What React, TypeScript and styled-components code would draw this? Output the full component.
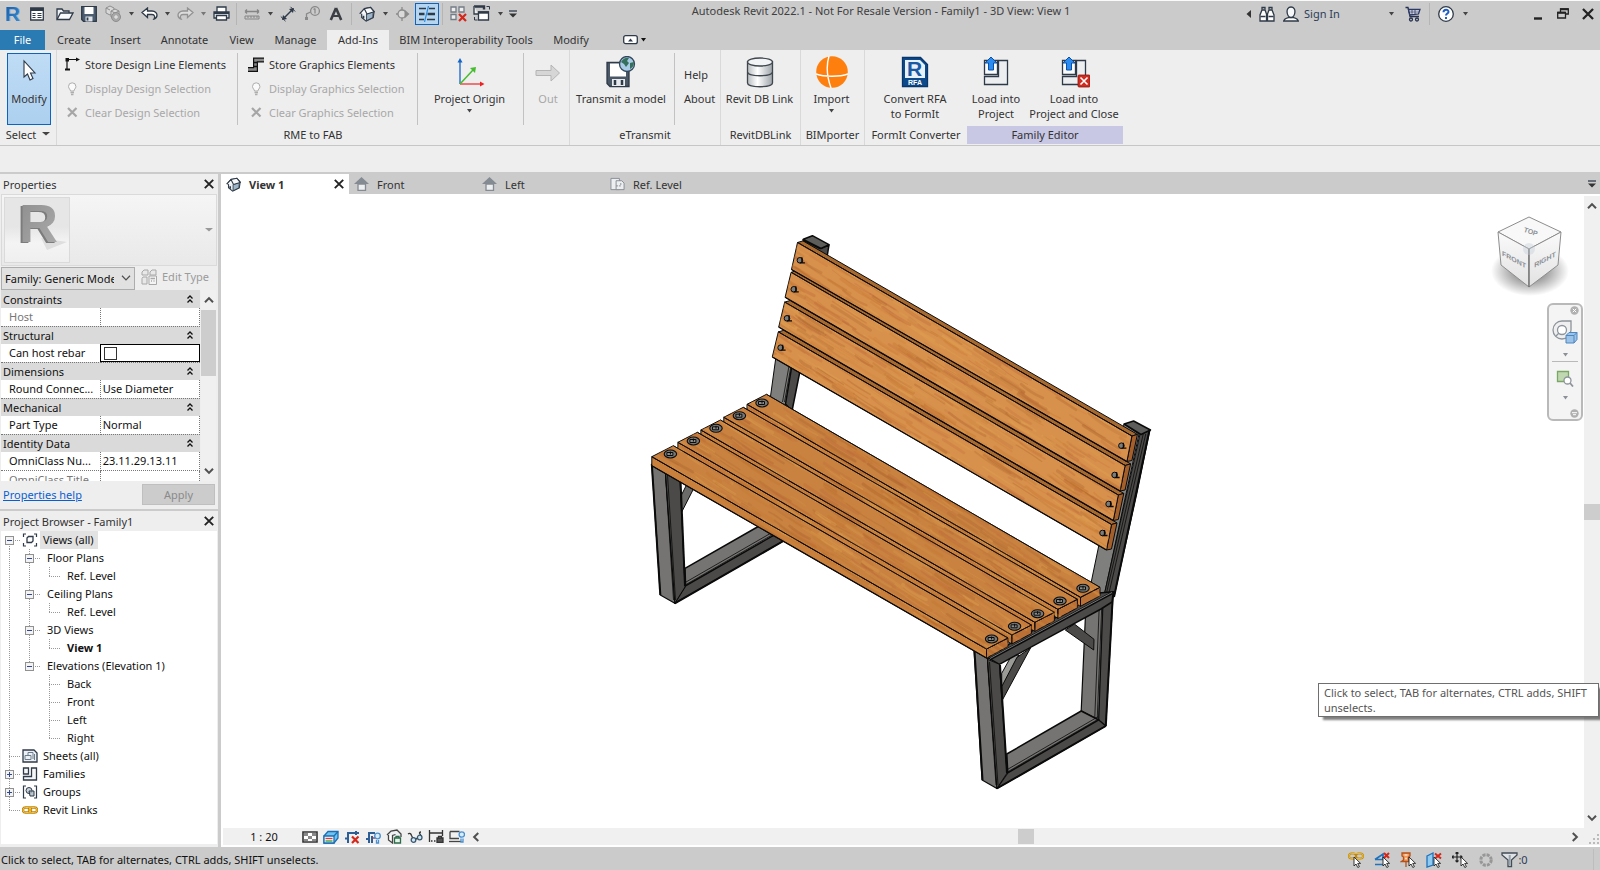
import React from 'react';
import styled, { createGlobalStyle, css } from 'styled-components';

const GlobalStyle = createGlobalStyle`
  * { box-sizing: border-box; }
  body { margin: 0; font-family: "Noto Sans", "Open Sans", sans-serif; font-size: 11px; line-height: 15px; color: #333; background: #eee; }
  button, select, input { font: inherit; color: inherit; }
  svg { display: block; flex: none; }
`;

/* ---------- shared pieces ---------- */

const bareButton = css`
  border: 0;
  padding: 0;
  margin: 0;
  background: none;
  display: flex;
  align-items: center;
  justify-content: center;
`;

const Window = styled.div`
  position: relative;
  display: flex;
  flex-direction: column;
  min-height: 100vh;
  background: #eee;
  overflow: hidden;
`;

const IconButton = styled.button<{ $w?: number }>`
  ${bareButton}
  flex: none;
  width: ${p => p.$w ?? 18}px;
  height: 20px;
`;

const Separator = styled.span`
  flex: none;
  width: 1px;
  height: 22px;
  background: #b5b5b5;
`;

const Caret = ({ color = '#444', w = 5 }: { color?: string; w?: number }) => (
  <svg width={w} height={4} viewBox="0 0 5 4" preserveAspectRatio="none"><path d="M0 0h5L2.5 3.5z" fill={color} /></svg>
);

const Icon = ({ w = 18, h, box, children }: { w?: number; h?: number; box?: string; children: React.ReactNode }) => (
  <svg width={w} height={h ?? w} viewBox={box ?? `0 0 ${w} ${h ?? w}`} fill="none" stroke="#2f3a48" strokeWidth={1.3}>{children}</svg>
);

const CloseMark = ({ s = 10, c = '#222' }: { s?: number; c?: string }) => (
  <svg width={s} height={s} viewBox="0 0 10 10"><path d="M.8.8l8.400 8.400M9.200.8L.8 9.200" stroke={c} strokeWidth="1.900" /></svg>
);

const Pointer = ({ x, y }: { x: number; y: number }) => (
  <path transform={`translate(${x} ${y})`} d="M0 0v9l2-2 1.800 3.500 1.600-.8L3.700 6.400h2.900z" fill="#fff" stroke="#222" strokeWidth=".9" />
);

/* ---------- title bar ---------- */

const TitleBar = styled.header`
  display: flex;
  align-items: center;
  height: 30px;
  padding-bottom: 4px;
  border-top: 1px solid #fafafa;
  background: #cbcbcb;
`;

const QuickAccess = styled.div`
  display: flex;
  align-items: center;
  gap: 6px;
  height: 24px;
  padding-left: 4px;
`;

const QuickGroup = styled(QuickAccess)``;

const ToggledButton = styled.button`
  ${bareButton}
  width: 24px;
  height: 22px;
  margin: 0 -3px;
  border: 1px solid #0a64c2;
  background: #b5d6f2;
`;

const Title = styled.h1`
  flex: 1;
  margin: 0 0 6px;
  font-size: 11px;
  font-weight: 400;
  text-align: center;
  white-space: nowrap;
  color: #404040;
`;

const AccountTools = styled.div`
  display: flex;
  align-items: center;
  gap: 8px;
  margin-right: 57px;
`;

const SignInButton = styled.button`
  ${bareButton}
  width: 114px;
  height: 20px;
  padding-right: 3px;
  gap: 5px;
  color: #2b3c57;
`;

const Grow = styled.span`
  flex: 1;
  text-align: left;
`;

const WindowControls = styled.div`
  display: flex;
`;

const RevitLogo = () => (
  <svg width="18" height="22" viewBox="0 0 18 22">
    <defs>
      <linearGradient id="logo" x1="0" x2="1" y2="1"><stop offset="0" stopColor="#1858a8" /><stop offset="1" stopColor="#3b8fd0" /></linearGradient>
      <filter id="logoDepth"><feDropShadow dx="1" dy="0" stdDeviation="0" floodColor="#7db5df" /></filter>
    </defs>
    <text x="1" y="18" fontFamily="Liberation Sans, sans-serif" fontWeight="700" fontSize="21" fill="url(#logo)" filter="url(#logoDepth)">R</text>
  </svg>
);

const BoxesIcon = () => (
  <Icon>
    <g stroke="#8d8d8d" fill="#d8d8d8" strokeWidth="1">
      <path d="M6 1l4 2v5L6 10 2 8V3z" /><path d="M11 4l4 2v6l-4 2-4-2V6z" /><path d="M7 6l4 2 4-2M11 8v6M2 3l4 2" fill="none" />
      <circle cx="12" cy="12" r="4.500" fill="#a8a8a8" /><path d="M10 12h4M12 10v4" stroke="#eee" />
    </g>
  </Icon>
);

const HouseIcon = ({ s = 18 }: { s?: number }) => (
  <Icon w={s} box="0 0 18 18">
    <path d="M1.500 8L6 3l7-1.500 4 4.500-1 7-8 4-5-4V8.500z" fill="#e9eef3" />
    <path d="M8.500 9L16 6.500 15.500 13 8.500 16.500z" fill="#9db4c8" strokeWidth="1" />
    <path d="M1 8.500L6 3l3 6M6 3l7-1.500 4 5-8 2.500" fill="#f7f9fb" /><path d="M5 11v3" strokeWidth="2" />
  </Icon>
);

const QuickAccessToolbar = () => (
  <QuickAccess>
    <IconButton aria-label="Revit"><RevitLogo /></IconButton>
    <IconButton aria-label="Home"><Icon w={14}><path d="M.7 1h12.600v12H.7z" fill="#fff" /><path d="M.7 2.500h12.600" strokeWidth="3" /><path d="M2.500 6.500h3M2.500 8.500h3M2.500 10.500h3M7.500 6.500h4M7.500 8.500h4M7.500 10.500h4" strokeWidth="1.200" /></Icon></IconButton>
    <QuickGroup>
      <IconButton aria-label="Open"><Icon w={18} h={14}><path d="M1 12V2h5l1.500 2H13v2" fill="#eef1f4" /><path d="M1 12.500L4.500 6H17l-3.500 6.500z" fill="#f8f9fa" /></Icon></IconButton>
      <IconButton aria-label="Save"><Icon w={16}><path d="M.7.7h14.600v14.600H2.500L.7 13.500z" fill="#4d5d70" /><path d="M3.500 1h9v7h-9z" fill="#fff" stroke="none" /><path d="M4.500 10.500h7v5h-7z" fill="#dfe4ea" stroke="none" /><path d="M6.500 11.500v3" strokeWidth="1.800" /></Icon></IconButton>
      <IconButton aria-label="Synchronize"><BoxesIcon /></IconButton>
      <IconButton $w={6} aria-label="Synchronize options"><Caret /></IconButton>
      <IconButton aria-label="Undo"><Icon w={17} h={13}><path d="M1 5.500L6.500 1v3H11c3.500 0 5 2.500 5 4s-1 3.500-3 4c1-1.500 1-4.500-2-4.500H6.500v3z" fill="#fff" /></Icon></IconButton>
      <IconButton $w={6} aria-label="Undo history"><Caret /></IconButton>
      <IconButton aria-label="Redo"><Icon w={17} h={13}><path d="M16 5.500L10.500 1v3H6C2.500 4 1 6.500 1 8s1 3.500 3 4C3 10.500 3 7.500 6 7.500h4.500v3z" fill="#dcdcdc" stroke="#929292" /></Icon></IconButton>
      <IconButton $w={6} aria-label="Redo history"><Caret color="#777" /></IconButton>
      <IconButton aria-label="Print"><Icon w={17} h={15}><path d="M4 6V1h9v5" fill="#fff" /><path d="M1 6h15v6H1z" fill="#e4e8ec" /><path d="M1 7h15" strokeWidth="2" /><path d="M3.500 9.500h10V14h-10z" fill="#fff" /></Icon></IconButton>
      <Separator />
      <IconButton aria-label="Measure"><Icon w={16} h={12}><path d="M1 3.500h14M1 3.500l2-2M1 3.500l2 2M15 3.500l-2-2M15 3.500l-2 2" stroke="#858585" /><path d="M1 8h14v3H1zM4 8v2M7 8v2M10 8v2M13 8v2" stroke="#858585" strokeWidth="1" /></Icon></IconButton>
      <IconButton $w={6} aria-label="Measure options"><Caret /></IconButton>
      <IconButton aria-label="Aligned dimension"><Icon w={16}><path d="M3 13L13 3" strokeWidth="1.400" /><path d="M2 14l1-5 4 4zM14 2l-1 5-4-4z" fill="#2f3a48" stroke="none" /><path d="M.8 10.500l4.700 4.700M10.500.8l4.700 4.700" strokeWidth="1" /></Icon></IconButton>
      <IconButton aria-label="Tag by category"><Icon w={17} h={15}><circle cx="11" cy="5" r="4.400" stroke="#8a8a8a" /><path d="M11 2.500v5M9.500 3.500l1.500-1M6.500 6L2.500 8v4" stroke="#8a8a8a" /><path d="M1 11h3v3H1z" fill="#8a8a8a" stroke="none" /></Icon></IconButton>
      <IconButton aria-label="Text"><Icon w={16}><path d="M8 2L2.800 14M8 2l5.200 12" strokeWidth="2.600" stroke="#3b3f45" /><path d="M4.500 10h7" strokeWidth="2" stroke="#3b3f45" /></Icon></IconButton>
      <Separator />
      <IconButton aria-label="Default 3D view"><HouseIcon s={16} /></IconButton>
      <IconButton $w={6} aria-label="3D view options"><Caret /></IconButton>
      <IconButton aria-label="Section"><Icon w={14}><circle cx="6" cy="7" r="4" stroke="#8a8a8a" fill="#dadada" /><path d="M0 7h2M6 0v3M6 11v3" stroke="#8a8a8a" /><path d="M8.500 2.500L13.500 7l-5 4.500z" fill="#8a8a8a" stroke="none" /></Icon></IconButton>
      <ToggledButton aria-label="Thin lines" aria-pressed="true"><Icon w={18} h={16}><path d="M1 2.500h7M11 2.500h6M1 13.500h5M9 13.500h8" strokeWidth="1.600" /><path d="M1 8h5.500M9.500 8H17" strokeWidth="2.600" /><path d="M10.500 0L6.500 16" stroke="#2f8be0" strokeWidth="1.200" /></Icon></ToggledButton>
      <Separator />
      <IconButton aria-label="Close inactive views"><Icon w={17}><path d="M1 2h5v5H1zM9 2h5v5H9zM1 9.500h5v5H1z" stroke="#737c86" fill="#eee" /><path d="M9 9l7 7M16 9l-7 7" stroke="#d3281c" strokeWidth="2.200" /></Icon></IconButton>
      <IconButton aria-label="Switch windows"><Icon w={18} h={17}><path d="M1 1.500h10v3" strokeWidth="2.400" /><path d="M1 1v8h4" fill="#eee" /><path d="M5.500 7h10v8h-10z" fill="#fff" /><path d="M5 7.500h11" strokeWidth="2.400" /><path d="M13.500 1.500h3v3M1.500 12v3h3" strokeWidth="1" /></Icon></IconButton>
      <IconButton $w={6} aria-label="Window list"><Caret /></IconButton>
      <IconButton $w={8} aria-label="Customize toolbar"><Icon w={8} h={8}><path d="M0 1h8" /><path d="M0 3.500h8L4 7.500z" fill="#333" stroke="none" /></Icon></IconButton>
    </QuickGroup>
  </QuickAccess>
);

const TopBar = () => (
  <TitleBar>
    <QuickAccessToolbar />
    <Title>Autodesk Revit 2022.1 - Not For Resale Version - Family1 - 3D View: View 1</Title>
    <AccountTools>
      <IconButton $w={6} aria-label="Collapse search"><Icon w={5} h={8}><path d="M5 0v8L.5 4z" fill="#333" stroke="none" /></Icon></IconButton>
      <IconButton $w={16} aria-label="Search"><Icon w={16}><path d="M1 15V9l2-5h3l1.500 4v7zM15 15V9l-2-5h-3L8.500 8v7z" fill="#fff" /><path d="M3 3.500V1.500h3v2M10 3.500V1.500h3v2M1.500 10.500h5M9.500 10.500h5" /></Icon></IconButton>
      <SignInButton>
        <Icon w={16}><path d="M.7 15c.5-2.500 3-3 5-3.500h4.600c2 .5 4.500 1 5 3.500z" fill="#fff" /><path d="M8 1c6 0 4.500 10 0 10.500C3.500 11 2 1 8 1z" fill="#f6f8fa" /></Icon>
        <Grow>Sign In</Grow>
        <Caret />
      </SignInButton>
      <IconButton $w={16} aria-label="App store"><Icon w={16}><path d="M.5 1.500H3L5 10.500h9" stroke="#27324f" /><path d="M3.500 3.500H15L13.500 8 5 9z" fill="#f2f4fb" stroke="#2c3a66" /><path d="M5 6h9M7 4v4.500M10 4v4" stroke="#2c3a66" strokeWidth=".8" /><circle cx="6" cy="13.500" r="1.500" stroke="#27324f" /><circle cx="12" cy="13.500" r="1.500" stroke="#27324f" /></Icon></IconButton>
      <Separator />
      <IconButton $w={16} aria-label="Help"><Icon w={16}><circle cx="8" cy="8" r="7.300" fill="#fff" /><path d="M5.500 6.200C5.500 2.800 10.700 3 10.500 6c-.1 1.500-2.500 1.700-2.500 3.500" stroke="#1f5fc4" strokeWidth="2" /><path d="M7 11h2v2H7z" fill="#1f5fc4" stroke="none" /></Icon></IconButton>
      <IconButton $w={6} aria-label="Help options"><Caret /></IconButton>
    </AccountTools>
    <WindowControls>
      <IconButton $w={25} aria-label="Minimize"><Icon w={8} h={12}><path d="M0 10.500h8" strokeWidth="2.400" stroke="#222" /></Icon></IconButton>
      <IconButton $w={25} aria-label="Restore"><Icon w={12} h={11}><path d="M3.500 4V1h7.800v5H8.500" stroke="#222" /><path d="M.7 4.500h7.800V10H.7z" stroke="#222" /><path d="M3 1.300h8.500M.5 4.800h8" stroke="#222" strokeWidth="2" /></Icon></IconButton>
      <IconButton $w={25} aria-label="Close"><CloseMark s={12} /></IconButton>
    </WindowControls>
  </TitleBar>
);

/* ---------- ribbon tabs ---------- */

const TabRow = styled.nav`
  display: flex;
  align-items: center;
  height: 20px;
  background: #cbcbcb;
`;

const RibbonTab = styled.button<{ $w: number; $kind?: 'file' | 'active' }>`
  ${bareButton}
  width: ${p => p.$w}px;
  height: 20px;
  padding-bottom: 2px;
  white-space: nowrap;
  color: ${p => (p.$kind === 'file' ? '#fff' : '#333')};
  background: ${p => (p.$kind === 'file' ? '#2a7ab3' : p.$kind === 'active' ? '#eee' : 'none')};
`;

const TabSpacer = styled.span<{ $w: number }>`
  width: ${p => p.$w}px;
`;

const tabs: [string, number][] = [
  ['Create', 54], ['Insert', 49], ['Annotate', 69], ['View', 45], ['Manage', 63],
  ['Add-Ins', 62], ['BIM Interoperability Tools', 154], ['Modify', 56],
];

const RibbonTabs = () => (
  <TabRow>
    <RibbonTab $w={45} $kind="file">File</RibbonTab>
    <TabSpacer $w={2} />
    {tabs.map(([name, w]) => <RibbonTab key={name} $w={w} $kind={name === 'Add-Ins' ? 'active' : undefined}>{name}</RibbonTab>)}
    <TabSpacer $w={22} />
    <IconButton aria-label="Minimize ribbon"><Icon w={15} h={10}><rect x=".7" y=".7" width="13.600" height="8" rx="2" fill="#fff" /><path d="M5 6.500h5L7.500 3.500z" fill="#2f3a48" stroke="none" /></Icon></IconButton>
    <IconButton $w={8} aria-label="Ribbon display options"><Caret color="#111" /></IconButton>
  </TabRow>
);

/* ---------- ribbon ---------- */

const Ribbon = styled.section`
  display: flex;
  height: 96px;
  background: #eee;
  border-bottom: 1px solid #c6c6c6;
`;

const Panel = styled.div<{ $w: number; $open?: boolean }>`
  display: flex;
  flex-direction: column;
  flex: none;
  width: ${p => p.$w}px;
  border-right: ${p => (p.$open ? 0 : 1)}px solid #d9d9d9;
`;

const PanelBody = styled.div`
  display: flex;
  height: 76px;
  padding: 3px 0 1px;
`;

const PanelTitle = styled.div<{ $accent?: boolean }>`
  display: flex;
  align-items: center;
  justify-content: center;
  gap: 6px;
  height: 18px;
  padding-bottom: 2px;
  white-space: nowrap;
  background: ${p => (p.$accent ? '#c8c7e4' : 'none')};
`;

const Column = styled.div<{ $w: number; $pad?: number; $last?: boolean }>`
  display: flex;
  flex-direction: column;
  flex: none;
  width: ${p => p.$w}px;
  padding-left: ${p => p.$pad ?? 0}px;
  border-right: ${p => (p.$last ? 0 : 1)}px solid #c2c2c2;
`;

const SmallButton = styled.button`
  ${bareButton}
  justify-content: flex-start;
  gap: 5px;
  height: 24px;
  padding-bottom: 2px;
  white-space: nowrap;
  &:disabled { color: #a8a8a8; }
`;

const LargeButton = styled.button<{ $w?: number }>`
  ${bareButton}
  flex: ${p => (p.$w ? 'none' : 1)};
  flex-direction: column;
  justify-content: flex-start;
  width: ${p => (p.$w ? `${p.$w}px` : 'auto')};
  padding: 3px 2px 0 0;
  gap: 3px;
  white-space: nowrap;
  &:disabled { color: #a8a8a8; }
`;

const ModifyButton = styled(LargeButton)`
  flex: none;
  width: 44px;
  height: 72px;
  margin-left: 7px;
  padding: 2px 0 0;
  border: 1px solid #0a64c2;
  background: linear-gradient(#c0dcf5, #acd0ef);
`;

const LargeIcon = ({ children }: { children?: React.ReactNode }) => <Icon w={32}>{children}</Icon>;

const BulbIcon = () => <Icon w={16}><path d="M6.500 11c0-1.500-2-2.500-2-4.500a3.700 3.700 0 017.400 0c0 2-2 3-2 4.500z" stroke="#adadad" fill="#fafafa" strokeWidth="1" /><path d="M6.500 12.500h3.500M7 14.500h2.500" stroke="#adadad" /></Icon>;
const ClearIcon = () => <Icon w={16}><path d="M4 4l8.500 8.500M12.500 4L4 12.500" stroke="#a6a6a6" strokeWidth="2.200" /></Icon>;

const LoadIcon = ({ close }: { close?: boolean }) => (
  <LargeIcon>
    <path d="M4.500 4.500h13v14h-13z" fill="#fafbfc" />
    <path d="M18.500 4.500h9V28.500h-23v-8h14z" fill="#eceef0" />
    <path d="M11 1l6 6h-3.500v7h-5V7H5z" fill="#2a8cf0" stroke="#0d4fa3" strokeWidth="1" />
    {close && <g><rect x="20" y="19" width="12" height="12" rx="1" fill="#d02c20" stroke="#8c1610" strokeWidth=".8" /><path d="M22.500 21.500l7 7M29.500 21.500l-7 7" stroke="#fff" strokeWidth="1.600" /></g>}
  </LargeIcon>
);

const AddInsRibbon = () => (
  <Ribbon>
    <Panel $w={57}>
      <PanelBody>
        <ModifyButton>
          <LargeIcon><path d="M11 5v16l3.500-3 2.500 6 3-1.500-2.500-5.500h4.500z" fill="#fff" strokeWidth="1.100" /></LargeIcon>
          Modify
        </ModifyButton>
      </PanelBody>
      <PanelTitle>Select <Caret w={8} /></PanelTitle>
    </Panel>
    <Panel $w={513}>
      <PanelBody>
        <Column $w={181} $pad={7}>
          <SmallButton><Icon w={16}><path d="M3 14V3.500h12" stroke="#111" strokeWidth="1.200" /><path d="M1.500 2h3.500v3.500H1.500zM1 12.500h5v2H1zM12 1.500l4 2-4 2z" fill="#111" stroke="none" /></Icon>Store Design Line Elements</SmallButton>
          <SmallButton disabled><BulbIcon />Display Design Selection</SmallButton>
          <SmallButton disabled><ClearIcon />Clear Design Selection</SmallButton>
        </Column>
        <Column $w={180} $pad={10}>
          <SmallButton><Icon w={16}><path d="M0 13.500h7.500V4H16" stroke="#111" strokeWidth="5" /><path d="M0 13.500h7.500V4H16" stroke="#8a8a8a" strokeWidth="2.600" /><path d="M5 10.500h5M5 6.500h5" stroke="#111" /></Icon>Store Graphics Elements</SmallButton>
          <SmallButton disabled><BulbIcon />Display Graphics Selection</SmallButton>
          <SmallButton disabled><ClearIcon />Clear Graphics Selection</SmallButton>
        </Column>
        <Column $w={106}>
          <LargeButton>
            <LargeIcon>
              <path d="M6 28V5" stroke="#1565c8" strokeWidth="1.300" /><path d="M3.500 6.500L6 2l2.500 4.500z" fill="#1565c8" stroke="none" />
              <path d="M6 28h20" stroke="#e33" strokeWidth="1.300" /><path d="M26 25.500l4.500 2.500-4.500 2.500z" fill="#e22" stroke="none" />
              <path d="M6 28L19 14" stroke="#45bd2c" strokeWidth="1.500" /><path d="M16 12l6-1-1 6z" fill="#45bd2c" stroke="none" />
            </LargeIcon>
            Project Origin
            <Caret />
          </LargeButton>
        </Column>
        <Column $w={50} $last>
          <LargeButton disabled>
            <LargeIcon><path d="M4 14.500h15V9l8.500 8-8.500 8v-5.500H4z" fill="#d6d6d6" stroke="#b4b4b4" strokeWidth="1" /></LargeIcon>
            Out
          </LargeButton>
        </Column>
      </PanelBody>
      <PanelTitle>RME to FAB</PanelTitle>
    </Panel>
    <Panel $w={151}>
      <PanelBody>
        <Column $w={105}>
          <LargeButton>
            <LargeIcon>
              <path d="M2 6.500h22v24H5l-3-3z" fill="#4a5766" /><path d="M5 7.500h16v13H5z" fill="#fff" stroke="none" /><path d="M7 23h13v7H7z" fill="#e6eaee" stroke="none" /><path d="M10 24v5M17 24v5" strokeWidth="2.500" />
              <circle cx="22" cy="8" r="7.500" fill="#a9cbe6" stroke="#33475c" /><path d="M16 6c2-4 6-5 8-4l-2 3 2 2-3 4-2-3zM25 7l4-1c0 4-2 6-4 7z" fill="#35705c" stroke="none" />
            </LargeIcon>
            Transmit a model
          </LargeButton>
        </Column>
        <Column $w={45} $pad={9} $last>
          <HelpLead />
          <SmallButton>Help</SmallButton>
          <SmallButton>About</SmallButton>
        </Column>
      </PanelBody>
      <PanelTitle>eTransmit</PanelTitle>
    </Panel>
    <Panel $w={80}>
      <PanelBody>
        <LargeButton>
          <LargeIcon>
            <defs><linearGradient id="steel"><stop offset="0" stopColor="#b8bcc0" /><stop offset=".4" stopColor="#fff" /><stop offset="1" stopColor="#9ea4aa" /></linearGradient></defs>
            <path d="M3.500 6v21c0 5 25 5 25 0V6z" fill="url(#steel)" stroke="#3f464d" /><ellipse cx="16" cy="6" rx="12.500" ry="4" fill="#f2f3f4" stroke="#3f464d" /><path d="M3.500 16c0 5 25 5 25 0" stroke="#3f464d" />
          </LargeIcon>
          Revit DB Link
        </LargeButton>
      </PanelBody>
      <PanelTitle>RevitDBLink</PanelTitle>
    </Panel>
    <Panel $w={64}>
      <PanelBody>
        <LargeButton>
          <LargeIcon><circle cx="16" cy="16" r="15.800" fill="#ff7f0e" stroke="none" /><path d="M13 0c-3 10-2 21 2 32M0 18c8 3 24 3 32 0" stroke="#fff" strokeWidth="1.400" /></LargeIcon>
          Import
          <Caret />
        </LargeButton>
      </PanelBody>
      <PanelTitle>BIMporter</PanelTitle>
    </Panel>
    <Panel $w={102} $open>
      <PanelBody>
        <LargeButton>
          <LargeIcon>
            <path d="M3.500 1.500h18l7 7v22h-25z" fill="#0d4a8c" stroke="#08366b" /><path d="M6 4h15l5 5v13H6z" fill="#e8f0f8" stroke="none" />
            <text x="8" y="20" fontFamily="Liberation Sans, sans-serif" fontWeight="700" fontSize="21" fill="#1a5aa5" stroke="none">R</text>
            <text x="16" y="29" textAnchor="middle" fontFamily="Liberation Sans, sans-serif" fontWeight="700" fontSize="7" fill="#fff" stroke="none">RFA</text>
          </LargeIcon>
          <span>Convert RFA<br />to FormIt</span>
        </LargeButton>
      </PanelBody>
      <PanelTitle>FormIt Converter</PanelTitle>
    </Panel>
    <Panel $w={156} $open>
      <PanelBody>
        <LargeButton $w={60}><LoadIcon /><span>Load into<br />Project</span></LargeButton>
        <LargeButton><LoadIcon close /><span>Load into<br />Project and Close</span></LargeButton>
      </PanelBody>
      <PanelTitle $accent>Family Editor</PanelTitle>
    </Panel>
  </Ribbon>
);

const HelpLead = styled.span`
  height: 10px;
`;

const OptionsBar = styled.div`
  height: 26px;
  background: #eee;
`;

/* ---------- left palettes ---------- */

const Workspace = styled.main`
  display: flex;
  flex: 1;
  min-height: 0;
`;

const Palettes = styled.aside`
  display: flex;
  flex-direction: column;
  flex: none;
  width: 221px;
  border-right: 3px solid #cbcbcb;
  border-top: 2px solid #cbcbcb;
`;

const PaletteHeader = styled.div`
  display: flex;
  align-items: center;
  justify-content: space-between;
  height: 20px;
  padding: 0 4px 0 3px;
`;

const TypeSelector = styled.div`
  display: flex;
  align-items: center;
  justify-content: space-between;
  height: 72px;
  margin: 0 1px;
  padding: 0 3px 0 2px;
  border: 1px solid #dadada;
  background: linear-gradient(#f5f5f5, #e9e9e9);
`;

const Thumbnail = styled.div`
  width: 66px;
  height: 66px;
  border: 1px solid #dadada;
  background: linear-gradient(#e6e6e6 45%, #f4f4f4 70%, #efefef);
`;

const TypeRow = styled.div`
  display: flex;
  align-items: center;
  gap: 6px;
  height: 24px;
  padding-left: 1px;
`;

const SelectWrap = styled.label`
  position: relative;
  display: flex;
  align-items: center;
`;

const SelectChevron = styled.span`
  position: absolute;
  right: 4px;
  pointer-events: none;
`;

const FamilySelect = styled.select`
  appearance: none;
  width: 134px;
  height: 23px;
  padding: 0 20px 0 3px;
  border: 1px solid #adadad;
  border-radius: 0;
  background: #e1e1e1;
  color: #111;
  overflow: hidden;
`;

const EditType = styled.button`
  ${bareButton}
  gap: 5px;
  padding-bottom: 3px;
  &:disabled { color: #9b9b9b; }
`;

const GridArea = styled.div`
  display: flex;
  height: 191px;
  overflow: hidden;
  padding-left: 1px;
`;

const PropertyTable = styled.table`
  width: 199px;
  height: 198px;
  table-layout: fixed;
  border-collapse: collapse;
  background: #fff;
  color: #111;
`;

const GroupCell = styled.th`
  height: 18px;
  padding: 0 7px 0 2px;
  text-align: left;
  font-weight: 400;
  background: #dadada;
`;

const GroupLine = styled.div`
  display: flex;
  align-items: center;
  justify-content: space-between;
  height: 17px;
`;

const Cell = styled.td<{ $dim?: boolean; $boxed?: boolean }>`
  height: 18px;
  line-height: 17px;
  padding: 0 0 0 8px;
  white-space: nowrap;
  overflow: hidden;
  text-overflow: ellipsis;
  color: ${p => (p.$dim ? '#777' : '#111')};
  border-right: 1px dotted #777;
  border-bottom: 1px dotted #777;
  & + & { padding-left: 2px; }
  ${p => p.$boxed && css`outline: 1px solid #000; outline-offset: -1px;`}
`;

const CheckBox = styled.input`
  appearance: none;
  display: block;
  width: 13px;
  height: 13px;
  margin: 1px 0 0 1px;
  border: 1px solid #333;
  background: #fff;
`;

const VScroll = styled.div<{ $w: number }>`
  display: flex;
  flex-direction: column;
  align-items: center;
  flex: none;
  width: ${p => p.$w}px;
  margin-left: 1px;
  background: #f0f0f0;
`;

const ScrollThumb = styled.div<{ $h: number; $w?: number }>`
  flex: none;
  width: ${p => (p.$w ? `${p.$w}px` : '100%')};
  height: ${p => p.$h}px;
  background: #cdcdcd;
`;

const PaletteFooter = styled.div`
  display: flex;
  align-items: center;
  justify-content: space-between;
  height: 28px;
  padding: 0 3px 2px;
`;

const HelpLink = styled.a`
  color: #0a5fd0;
  text-decoration: underline;
`;

const ApplyButton = styled.button`
  width: 73px;
  height: 21px;
  padding: 0;
  border: 1px solid #bfbfbf;
  background: #cccccc;
  &:disabled { color: #8a8a8a; }
`;

const Splitter = styled.div`
  height: 2px;
  background: #cbcbcb;
`;

const Arrow = ({ dir, s = 8, thin }: { dir: 'up' | 'down' | 'left' | 'right'; s?: number; thin?: boolean }) => {
  const turn = { up: 0, right: 90, down: 180, left: 270 }[dir];
  return <svg width={s} height={s} viewBox="0 0 8 8"><path transform={`rotate(${turn} 4 4)`} d="M.8 5.800L4 2.500l3.200 3.300" stroke="#505050" strokeWidth={thin ? 1 : 1.6} fill="none" /></svg>;
};

type PropRow = { group: string } | { name: string; value: React.ReactNode; dim?: boolean; boxed?: boolean };
const propertyRows: PropRow[] = [
  { group: 'Constraints' }, { name: 'Host', value: '', dim: true },
  { group: 'Structural' }, { name: 'Can host rebar', value: <CheckBox type="checkbox" aria-label="Can host rebar" />, boxed: true },
  { group: 'Dimensions' }, { name: 'Round Connec...', value: 'Use Diameter' },
  { group: 'Mechanical' }, { name: 'Part Type', value: 'Normal' },
  { group: 'Identity Data' }, { name: 'OmniClass Nu...', value: '23.11.29.13.11' },
  { name: 'OmniClass Title', value: '', dim: true },
];

const PropertiesPalette = () => (
  <>
    <PaletteHeader>Properties<IconButton $w={10} aria-label="Close properties"><CloseMark /></IconButton></PaletteHeader>
    <TypeSelector>
      <Thumbnail>
        <svg width="64" height="64" viewBox="0 0 64 64">
          <defs>
            <linearGradient id="grayR" x2="1" y2="1"><stop offset="0" stopColor="#8c8c8c" /><stop offset="1" stopColor="#adadad" /></linearGradient>
            <filter id="thumbDepth"><feDropShadow dx="-2" dy="1" stdDeviation="0" floodColor="#7c7c7c" /></filter>
          </defs>
          <path d="M36 40l26 4-20 8z" fill="#dedede" />
          <text x="14" y="44" fontFamily="Liberation Sans, sans-serif" fontWeight="700" fontSize="54" fill="url(#grayR)" filter="url(#thumbDepth)">R</text>
        </svg>
      </Thumbnail>
      <Caret w={8} color="#999" />
    </TypeSelector>
    <TypeRow>
      <SelectWrap>
        <FamilySelect aria-label="Family"><option>Family: Generic Models</option></FamilySelect>
        <SelectChevron><Arrow dir="down" s={10} thin /></SelectChevron>
      </SelectWrap>
      <EditType disabled>
        <Icon w={16}><path d="M1 3l2-2h4v5H1zM9 3l2-2h4v5H9zM1 9.500l1-1.500h4v7H1z" stroke="#a8a8a8" fill="#e8e8e8" strokeWidth="1" /><path d="M8 7h7.500v8.500H8z" stroke="#a8a8a8" fill="#f4f4f4" strokeWidth="1" /><path d="M9.500 9.500h4.500M10 12h1M12.500 12h1" stroke="#a8a8a8" /></Icon>
        Edit Type
      </EditType>
    </TypeRow>
    <GridArea>
      <PropertyTable>
        <tbody>
          {propertyRows.map(row => 'group' in row
            ? <tr key={row.group}><GroupCell colSpan={2}><GroupLine>{row.group}<Icon w={6} h={8}><path d="M.5 3.500L3 1l2.500 2.500M.5 7.500L3 5l2.500 2.500" stroke="#111" /></Icon></GroupLine></GroupCell></tr>
            : <tr key={row.name}><Cell $dim={row.dim}>{row.name}</Cell><Cell $boxed={row.boxed}>{row.value}</Cell></tr>)}
        </tbody>
      </PropertyTable>
      <VScroll $w={15}>
        <IconButton $w={15} aria-label="Scroll up"><Arrow dir="up" s={10} /></IconButton>
        <ScrollThumb $h={66} />
        <Grow />
        <IconButton $w={15} aria-label="Scroll down"><Arrow dir="down" s={10} /></IconButton>
      </VScroll>
    </GridArea>
    <PaletteFooter><HelpLink href="#help">Properties help</HelpLink><ApplyButton disabled>Apply</ApplyButton></PaletteFooter>
    <Splitter />
  </>
);

/* ---------- project browser ---------- */

const Tree = styled.ul`
  flex: 1;
  margin: 0 1px 3px;
  padding: 0;
  list-style: none;
  background: #fff;
  color: #111;
`;

const TreeRow = styled.li`
  display: flex;
  align-items: center;
  height: 18px;
  white-space: nowrap;
`;

type Guide = ' ' | 'v' | 't' | 'l' | 'b';

/* one 20px step of indentation: v passes through, t branches, l ends, b begins */
const GuideCell = styled.span<{ $kind: Guide }>`
  display: flex;
  align-items: center;
  flex: none;
  width: 20px;
  height: 18px;
  padding-left: 4px;
  background-repeat: no-repeat;
  background-image:
    repeating-linear-gradient(#999 0 1px, transparent 1px 2px),
    repeating-linear-gradient(90deg, #999 0 1px, transparent 1px 2px);
  background-position: 8px ${p => (p.$kind === 'b' ? 9 : 0)}px, 8px 9px;
  background-size:
    ${p => (p.$kind === ' ' ? 0 : 1)}px ${p => (p.$kind === 'l' || p.$kind === 'b' ? 9 : 18)}px,
    ${p => (p.$kind === ' ' || p.$kind === 'v' ? 0 : 12)}px 1px;
`;

const Expander = styled.button`
  ${bareButton}
  width: 9px;
  height: 9px;
  border: 1px solid #919191;
  background: #f3f3f3;
`;

const TreeIcon = styled.span`
  width: 18px;
  padding-left: 1px;
`;

const TreeLabel = styled.span<{ $icon?: boolean; $selected?: boolean; $bold?: boolean }>`
  padding: 0 4px 0 ${p => (p.$icon ? 3 : 6)}px;
  margin-left: ${p => (p.$icon ? 1 : 0)}px;
  height: 18px;
  line-height: 18px;
  background: ${p => (p.$selected ? '#e2e2e2' : 'none')};
  font-weight: ${p => (p.$bold ? 700 : 400)};
`;

const treeIcons: Record<string, React.ReactNode> = {
  views: <Icon w={16} h={14}><path d="M4 1H1.500v3M12 1h2.500v3M4 13H1.500v-3M12 13h2.500v-3" strokeWidth="1.200" /><path d="M5 5l1.500-1.500H11V8L9.500 9.500H5z" fill="#fff" /></Icon>,
  sheets: <Icon w={16} h={14}><path d="M1 1h11l3 3v9H1z" fill="#eef1f4" /><path d="M3 6.500h6v4H3zM6 6.500V3.500h5V10M12.500 5v6" strokeWidth="1" stroke="#6b7c8e" /></Icon>,
  families: <Icon w={16} h={14}><path d="M1.500 1h5v6h-5zM9.500 1h5v12h-13V9.500h8z" fill="#f4f6f8" /></Icon>,
  groups: <Icon w={16} h={14}><path d="M4 1H1.500v12H4M12 1h2.500v12H12" strokeWidth="1.200" /><circle cx="7" cy="5.500" r="3" fill="#c9d2db" strokeWidth="1" /><path d="M7 6h5v5H8z" fill="#aeb9c4" fillOpacity=".8" strokeWidth="1" /></Icon>,
  links: <Icon w={16} h={8}><rect x="1" y="1.500" width="8" height="5" rx="2.500" stroke="#b97f10" strokeWidth="2.400" /><rect x="7" y="1.500" width="8" height="5" rx="2.500" stroke="#b97f10" strokeWidth="2.400" /><rect x="1" y="1.500" width="8" height="5" rx="2.500" stroke="#f5c53a" strokeWidth="1" /><rect x="7" y="1.500" width="8" height="5" rx="2.500" stroke="#f5c53a" strokeWidth="1" /></Icon>,
};

const treeRows: { guides: Guide[]; label: string; exp?: '+' | '-'; icon?: string; selected?: boolean; bold?: boolean }[] = [
  { guides: ['b'], label: 'Views (all)', exp: '-', icon: 'views', selected: true },
  { guides: ['v', 't'], label: 'Floor Plans', exp: '-' },
  { guides: ['v', 'v', 'l'], label: 'Ref. Level' },
  { guides: ['v', 't'], label: 'Ceiling Plans', exp: '-' },
  { guides: ['v', 'v', 'l'], label: 'Ref. Level' },
  { guides: ['v', 't'], label: '3D Views', exp: '-' },
  { guides: ['v', 'v', 'l'], label: 'View 1', bold: true },
  { guides: ['v', 'l'], label: 'Elevations (Elevation 1)', exp: '-' },
  { guides: ['v', ' ', 't'], label: 'Back' },
  { guides: ['v', ' ', 't'], label: 'Front' },
  { guides: ['v', ' ', 't'], label: 'Left' },
  { guides: ['v', ' ', 'l'], label: 'Right' },
  { guides: ['t'], label: 'Sheets (all)', icon: 'sheets' },
  { guides: ['t'], label: 'Families', exp: '+', icon: 'families' },
  { guides: ['t'], label: 'Groups', exp: '+', icon: 'groups' },
  { guides: ['l'], label: 'Revit Links', icon: 'links' },
];

const ProjectBrowser = () => (
  <>
    <PaletteHeader>Project Browser - Family1<IconButton $w={10} aria-label="Close project browser"><CloseMark /></IconButton></PaletteHeader>
    <Tree>
      {treeRows.map((row, i) => (
        <TreeRow key={i}>
          {row.guides.map((g, j) => (
            <GuideCell key={j} $kind={g}>
              {row.exp && j === row.guides.length - 1 && (
                <Expander aria-label={`Toggle ${row.label}`}>
                  <svg width="7" height="7" viewBox="0 0 7 7"><path d={row.exp === '+' ? 'M1 3.500h5M3.500 1v5' : 'M1 3.500h5'} stroke="#33478f" /></svg>
                </Expander>
              )}
            </GuideCell>
          ))}
          {row.icon && <TreeIcon>{treeIcons[row.icon]}</TreeIcon>}
          <TreeLabel $icon={!!row.icon} $selected={row.selected} $bold={row.bold}>{row.label}</TreeLabel>
        </TreeRow>
      ))}
    </Tree>
  </>
);

/* ---------- drawing area ---------- */

const ViewArea = styled.section`
  display: flex;
  flex-direction: column;
  flex: 1;
  min-width: 0;
  background: #fff;
`;

const ViewTabs = styled.div`
  display: flex;
  align-items: flex-end;
  height: 22px;
  background: #cbcbcb;
`;

const ViewTab = styled.button<{ $active?: boolean }>`
  ${bareButton}
  width: 128px;
  height: 20px;
  padding: 0 5px;
  gap: 8px;
  font-weight: ${p => (p.$active ? 700 : 400)};
  background: ${p => (p.$active ? '#fff' : 'none')};
`;

const TabListButton = styled(IconButton)`
  margin-left: auto;
  margin-right: 4px;
`;

const CanvasRow = styled.div`
  display: flex;
  flex: 1;
`;

const Canvas = styled.div`
  position: relative;
  display: flex;
  align-items: center;
  justify-content: center;
  flex: 1;
  min-width: 0;
`;

const CanvasScroll = styled(VScroll)`
  justify-content: space-between;
  margin: 2px 0 0;
`;

const CubeHolder = styled.div`
  position: absolute;
  top: 15px;
  right: 10px;
`;

const NavBar = styled.div`
  position: absolute;
  top: 109px;
  right: 1px;
  display: flex;
  flex-direction: column;
  align-items: center;
  width: 36px;
  height: 118px;
  padding: 1px 2px;
  border: 2px solid #b9b9b9;
  border-radius: 6px;
  background: #f4f4f4;
`;

const NavEdge = styled.button`
  ${bareButton}
  align-self: flex-end;
  height: 10px;
`;

const NavTool = styled.button<{ $h: number }>`
  ${bareButton}
  flex-direction: column;
  width: 28px;
  height: ${p => p.$h}px;
  gap: 9px;
`;

const NavRule = styled.span`
  width: 26px;
  height: 1px;
  background: #b9b9b9;
`;

const ViewCube = () => (
  <svg width="84" height="96" viewBox="1490 209 84 96">
    <defs>
      <radialGradient id="cubeShadow"><stop offset=".3" stopColor="#000" stopOpacity=".45" /><stop offset="1" stopColor="#000" stopOpacity="0" /></radialGradient>
      <linearGradient id="cubeLeft" x2="0" y2="1"><stop offset="0" stopColor="#fafafa" /><stop offset="1" stopColor="#e2e2e2" /></linearGradient>
    </defs>
    <ellipse cx="1530" cy="271" rx="39" ry="25" fill="url(#cubeShadow)" />
    <g stroke="#8d8d8d" strokeWidth="1" strokeLinejoin="round">
      <path d="M1529 217l32 15-32 17-31-17z" fill="#f8f8f8" />
      <path d="M1498 232l31 17v38l-28-22z" fill="url(#cubeLeft)" />
      <path d="M1561 232l-32 17v38l29-22z" fill="url(#cubeLeft)" />
    </g>
    <path d="M1529 249v38" stroke="#666" />
    <circle cx="1529" cy="249" r="6" fill="#c4ccd8" fillOpacity=".4" />
    <g fontFamily="Liberation Sans, sans-serif" fontWeight="700" fontSize="7" fill="#8b9097" textAnchor="middle">
      <text transform="translate(1514 262) skewY(28)">FRONT</text>
      <text transform="translate(1545 262) skewY(-28)">RIGHT</text>
      <text transform="translate(1530 234) rotate(18)">TOP</text>
    </g>
  </svg>
);

/* ---------- bench model ---------- */

type Pt = [number, number];
const poly = (...pts: Pt[]) => pts.map(p => p.join(',')).join(' ');

const Face = ({ pts, fill, w = 1 }: { pts: Pt[]; fill: string; w?: number }) => (
  <polygon points={poly(...pts)} fill={fill} stroke="#0a0a0a" strokeWidth={w} strokeLinejoin="round" />
);

const Line = ({ a, b, w = 0.8 }: { a: Pt; b: Pt; w?: number }) => (
  <line x1={a[0]} y1={a[1]} x2={b[0]} y2={b[1]} stroke="#0a0a0a" strokeWidth={w} />
);

/* fine edge lines running next to the joint between two tube faces */
const Ribs = ({ a, b, d }: { a: Pt; b: Pt; d: Pt }) => (
  <>{[-1.5, -0.5].map(k => <Line key={k} a={[a[0] + d[0] * k, a[1] + d[1] * k]} b={[b[0] + d[0] * k, b[1] + d[1] * k]} />)}</>
);

const add = (p: Pt, x: number, y: number): Pt => [p[0] + x, p[1] + y];

const slats = [0, 1, 2, 3].map(i => {
  const tl: Pt = [797.5 - i * 6.4, 242.5 + i * 29.8];
  const tr: Pt = [1131.9 - i * 6.8, 436 + i * 29.5];
  const drop = i === 0 ? 27 : 25;
  return { tl, tr, bl: add(tl, -6, drop), br: add(tr, -5, 25.5) };
});

const boards = ([
  [[747, 404.3], [1080.5, 597.3]], [[723.8, 417.3], [1057.9, 609.3]], [[700.9, 430], [1034.9, 622.3]],
  [[677.9, 442.3], [1011.9, 635]], [[651.8, 456.7], [986.5, 649]],
] as [Pt, Pt][]).map(([l, r], i) => ({ l, r, back: (i === 4 ? [21.5, -11] : [19.5, -10]) as Pt }));

const slatBolts: Pt[] = [[799.9, 260.3], [793.8, 289.3], [787, 318.3], [780.6, 347.7], [1121.4, 445.7], [1114.6, 475], [1108.6, 504], [1102.5, 533]];
const seatBolts: Pt[] = [[670.4, 454], [693.4, 441], [716, 428.3], [739.4, 415.7], [762, 403], [991.6, 639], [1014.6, 626.3], [1037.6, 613.7], [1060, 601], [1083, 588.3]];

const LIGHT = '#757472';
const MID = '#7f7f7d';
const DARK = '#4b4a48';

/* streaks of wood grain, spread by a small repeatable random sequence */
const streaks = (() => {
  let s = 11;
  const rnd = () => (s = (s * 16807) % 2147483647) / 2147483647;
  return Array.from({ length: 2600 }, () => {
    const u = rnd() * 520 - 20;
    const x = 645 + u;
    const y = 365 + u * 0.577 + (rnd() - 0.5) * 500;
    const len = 10 + rnd() * 32;
    const bend = (rnd() - 0.5) * 4;
    return {
      d: `M${x.toFixed(1)} ${y.toFixed(1)}q${(len * 0.4).toFixed(1)} ${(len * 0.3 + bend).toFixed(1)} ${len.toFixed(1)} ${(len * 0.64).toFixed(1)}`,
      tone: ['#a95f2a', '#bd6a3a', '#e0a352', '#c4762f'][Math.floor(rnd() * 4)],
      w: (1 + rnd() * 2.4).toFixed(1),
      o: (0.14 + rnd() * 0.24).toFixed(2),
    };
  });
})();

const Grain = ({ clip }: { clip: string }) => (
  <g clipPath={`url(#${clip})`} fill="none" strokeLinecap="round">
    {streaks.map((k, i) => <path key={i} d={k.d} stroke={k.tone} strokeWidth={k.w} opacity={k.o} />)}
  </g>
);

const Bench = () => (
  <svg width="525" height="570" viewBox="640 226 525 570" role="img" aria-label="Bench">
    <defs>
      <clipPath id="slatClip">{slats.map((s, i) => <polygon key={i} points={poly(s.tl, s.tr, s.br, s.bl)} />)}</clipPath>
      <clipPath id="seatClip">
        {boards.map((b, i) => <polygon key={i} points={poly(b.l, add(b.l, ...b.back), add(b.r, ...b.back), add(add(b.r, ...b.back), 0, 9), add(b.r, 0, 9), add(b.l, 0, 9))} />)}
      </clipPath>
    </defs>

    {/* rear posts */}
    <Face pts={[[776.2, 355], [770, 400], [786, 407], [794, 362]]} fill={MID} />
    <Face pts={[[792.500, 362], [785.500, 404], [792, 411], [801, 366]]} fill={DARK} w={1.500} />
    <Ribs a={[792, 366]} b={[785.500, 402]} d={[2, 0]} />
    <Face pts={[[803, 240], [820, 248.500], [829, 245], [826.500, 260], [808, 250]]} fill={DARK} w={1.500} />
    <Face pts={[[803.3, 239.3], [812.4, 235.7], [829, 244.7], [821, 248.500]]} fill="#5d5d5b" w={1.500} />
    <Face pts={[[1124, 424], [1139, 434], [1104, 596], [1090, 588]]} fill={MID} />
    <Face pts={[[1140, 434], [1150, 429.7], [1137, 493], [1114, 597], [1104, 596]]} fill={DARK} w={1} />
    <Line a={[1149.500, 430]} b={[1114, 597]} w={2} />
    <Ribs a={[1142, 434]} b={[1105, 594]} d={[-2.500, 0]} />
    <Face pts={[[1124.1, 424], [1133.6, 421], [1150.500, 430], [1141, 434.500]]} fill="#5d5d5b" w={1.500} />

    {/* backrest */}
    {[...slats].reverse().map((s, i) => (
      <g key={i}>
        <Face pts={[s.tl, add(s.tl, 5.5, -1.6), add(s.tr, 5.5, -1.6), s.tr]} fill="#a8692f" />
        <Face pts={[s.tr, add(s.tr, 5.5, -1.6), add(s.br, 5, -1), s.br]} fill="#a55f2a" />
        <Face pts={[s.tl, s.tr, s.br, s.bl]} fill="#d8914c" />
      </g>
    ))}
    <Grain clip="slatClip" />
    {slats.map((s, i) => <React.Fragment key={i}><Line a={s.bl} b={s.br} w={1.2} /><Line a={s.tl} b={s.tr} /></React.Fragment>)}
    {slatBolts.map(([x, y], i) => (
      <g key={i}><circle cx={x} cy={y} r="2.800" fill="#7c7c7a" stroke="#0a0a0a" /><path d={`M${x + 2} ${y - 3}v6M${x} ${y + 2.5}h5`} stroke="#0a0a0a" strokeWidth="1.300" /></g>
    ))}

    {/* left frame */}
    <Face pts={[[680.6, 496.7], [690, 478], [697, 482], [681.2, 513]]} fill="#6b6b69" />
    <Face pts={[[685, 568.3], [760, 525.500], [782, 531], [685.6, 586]]} fill={LIGHT} w={1.500} />
    <Face pts={[[685.6, 586], [778, 533], [786, 539.500], [674.8, 603.3]]} fill={DARK} w={1.200} />
    <Line a={[786, 539.500]} b={[674.8, 603.3]} w={2} />
    <Ribs a={[685.6, 586]} b={[775, 534.500]} d={[0, 2.500]} />
    <Face pts={[[651.8, 464], [665.4, 472], [674.8, 603.3], [660.3, 595]]} fill={LIGHT} w={1.200} />
    <Face pts={[[665.4, 472], [680, 480], [685, 587], [674.8, 603.3]]} fill={DARK} w={1} />
    <Line a={[680.500, 480]} b={[685, 586]} w={2} />
    <Line a={[651.8, 464]} b={[660.300, 595]} w={2} />
    <Ribs a={[668.500, 475]} b={[676.500, 600]} d={[2, 0]} />

    {/* right frame */}
    <Face pts={[[1001.7, 673.3], [1011.9, 655], [1019, 655], [1001.7, 690]]} fill="#9a9a96" />
    <Face pts={[[1017, 657.3], [1030.5, 648], [1002.4, 700], [1001.7, 686.7]]} fill={DARK} />
    <Face pts={[[1085.6, 612], [1103, 604], [1098.8, 720], [1081.2, 710.7]]} fill={LIGHT} w={1.200} />
    <Face pts={[[1103, 604], [1113.3, 591], [1105.8, 726], [1098.8, 720]]} fill={DARK} w={1} />
    <Line a={[1113, 592]} b={[1105.800, 726]} w={2} />
    <Ribs a={[1103, 606]} b={[1098.500, 718]} d={[2.500, 0]} />
    <Face pts={[[1065.3, 630], [1074.4, 624], [1094, 639.3], [1093.7, 650]]} fill={DARK} />
    <Face pts={[[1006.8, 754], [1081.2, 711], [1098.8, 720], [1007.8, 773]]} fill={LIGHT} w={1.500} />
    <Face pts={[[1007.8, 773], [1098.8, 720], [1105.8, 726], [996.9, 788.5]]} fill={DARK} w={1.200} />
    <Line a={[1105.8, 726]} b={[996.9, 788.5]} w={2} />
    <Ribs a={[1007.8, 773]} b={[1098, 720.500]} d={[0, 2.500]} />
    <Face pts={[[986.500, 657], [1099, 593], [1113.3, 591.7], [1112, 602], [1101, 609], [999.4, 664.3]]} fill={DARK} w={1.500} />
    <Line a={[990, 659]} b={[1112, 593]} w={3} />
    <line x1="990" y1="658.500" x2="1112" y2="592.500" stroke="#777" strokeWidth="1" />
    <Face pts={[[974, 650], [987.5, 658.5], [996.9, 788.5], [982.1, 780]]} fill={LIGHT} w={1.200} />
    <Face pts={[[987.5, 659.3], [999.4, 664.3], [1007, 773], [996.9, 788.5]]} fill={DARK} w={1} />
    <Line a={[974.500, 651]} b={[982.500, 780]} w={2} />
    <Line a={[1000, 665]} b={[1007, 773]} w={2} />
    <Ribs a={[990.500, 662]} b={[999, 785]} d={[2, 0]} />

    {/* seat */}
    {boards.map(({ l, r, back }, i) => (
      <g key={i}>
        <Face pts={[l, r, add(r, 0, 9), add(l, 0, 9)]} fill="#c8803c" />
        <Face pts={[r, add(r, ...back), add(add(r, ...back), 0, 8.5), add(r, 0, 9)]} fill="#bb7136" />
        <Face pts={[l, add(l, ...back), add(r, ...back), r]} fill="#c98240" />
      </g>
    ))}
    <Grain clip="seatClip" />
    {boards.map(({ l, r, back }, i) => <React.Fragment key={i}><Line a={l} b={r} /><Line a={add(l, ...back)} b={add(r, ...back)} /><Line a={r} b={add(r, ...back)} /><Line a={r} b={add(r, 0, 9)} /></React.Fragment>)}
    <Line a={add(boards[4].l, 0, 9)} b={add(boards[4].r, 0, 9)} w={1.2} />
    {seatBolts.map(([x, y], i) => (
      <g key={i} stroke="#0a0a0a"><ellipse cx={x} cy={y} rx="6.200" ry="4" fill="#777775" strokeWidth="1.100" /><path d={`M${x - 3.500} ${y - 1.500}h6v3h-6zM${x} ${y - 2.500}v3`} fill="#8b8b89" strokeWidth="1" /></g>
    ))}
  </svg>
);

/* ---------- view control bar ---------- */

const ViewBar = styled.div`
  display: flex;
  align-items: center;
  height: 17px;
  margin: 0 0 2px 2px;
  background: #f0f0f0;
`;

const ScaleButton = styled.button`
  ${bareButton}
  width: 76px;
  padding-left: 6px;
  color: #111;
`;

const HScroll = styled.div`
  display: flex;
  align-items: center;
  justify-content: space-between;
  flex: 1;
`;

const Grip = () => (
  <Icon w={16}><path d="M14 5v2M14 9v2M14 13v2M10 9v2M10 13v2M6 13v2" stroke="#bbb" strokeWidth="2" /></Icon>
);

const viewIcons: [string, React.ReactNode][] = [
  ['Detail level', <Icon w={16} h={12}><path d="M1 1h14v10H1z" fill="#fff" stroke="#333" strokeWidth="1.600" /><path d="M2 2h4v3H2zM10 2h4v3h-4zM6 5h4v3H6zM2 8h4v2H2zM10 8h4v2h-4z" fill="#888" stroke="none" /></Icon>],
  ['Visual style', <Icon w={16} h={14}><path d="M1 6l4-4.500h10V8l-4 5H1z" fill="#6ec3f0" stroke="#1c6fb4" /><path d="M1 6h10v7H1z" fill="#f2f9fd" stroke="#1c6fb4" /><path d="M11 6l4-4.500" stroke="#1c6fb4" /><path d="M2.500 8.500h7" stroke="#e33" /><path d="M2.500 11h7" stroke="#2b9b3a" /></Icon>],
  ['Crop view off', <Icon w={16} h={14}><path d="M4 13V3h11M1 8.500h3M12 1v4" stroke="#2d5f96" strokeWidth="2" /><path d="M8 6.500l6.500 6.500M14.500 6.500L8 13" stroke="#d3281c" strokeWidth="2.200" /></Icon>],
  ['Show crop region', <Icon w={16} h={14}><path d="M4 13V3h6M1 9h3M7 6v7" stroke="#2d5f96" strokeWidth="2" /><path d="M8 8h2" stroke="#d33" /><circle cx="12.500" cy="6" r="2.800" fill="#d8ecfb" stroke="#4a90cf" /><path d="M11.500 10v3h2v-3" stroke="#4a90cf" /></Icon>],
  ['Lock 3D view', <Icon w={16} h={15}><path d="M1 6l4-4 6-1 4 4v3" fill="#eef1f4" stroke="#444" /><path d="M2.500 6v5l4 3V6.500l3-1" fill="#fff" stroke="#444" /><path d="M8.500 9h6v5h-6z" fill="#e3f4e9" stroke="#2d6a4a" /><path d="M10 9V7.500h3V9" stroke="#2d6a4a" /></Icon>],
  ['Temporary hide', <Icon w={16} h={12}><path d="M1 3c2-1.500 3 0 3.500 1.500l1.500 3M14 1c-1.500 0-2 1-1 2l1.500 3M8.500 8.500l2-1.500" stroke="#333" /><circle cx="6.500" cy="9" r="2.300" fill="#cfe6f5" stroke="#3b5a70" /><circle cx="12.700" cy="6.500" r="2.300" fill="#cfe6f5" stroke="#3b5a70" /></Icon>],
  ['Reveal constraints', <Icon w={16} h={13}><path d="M1 3h14M1.500 0v12M14.500 0v6" stroke="#333" /><path d="M3 11h5" strokeDasharray="1.500 1.500" stroke="#333" /><path d="M9 8h6v4.500H9z" fill="#555" stroke="#333" /><path d="M10.500 8V6.500h3V8" stroke="#333" /></Icon>],
  ['Analytical model', <Icon w={16} h={13}><path d="M1 1.500h9.500M1 1.500v7h9" stroke="#444" fill="none" /><path d="M0 11.500h12" stroke="#444" /><circle cx="12.800" cy="4.500" r="2.700" fill="#d8ecfb" stroke="#4a90cf" /><path d="M12 8.500V12h2V8.500" stroke="#4a90cf" /></Icon>],
];

const ViewTabHouse = () => <Icon w={15} h={14}><path d="M7.500 0L15 7H0z" fill="#858b92" stroke="none" /><path d="M4 7h7.500v6.300H4z" fill="#eceef0" stroke="#858b92" /></Icon>;

const DrawingArea = () => (
  <ViewArea>
    <ViewTabs>
      <ViewTab $active><HouseIcon s={15} /><Grow>View 1</Grow><CloseMark s={10} /></ViewTab>
      <ViewTab><ViewTabHouse /><Grow>Front</Grow></ViewTab>
      <ViewTab><ViewTabHouse /><Grow>Left</Grow></ViewTab>
      <ViewTab><Icon w={15} h={14} box="0 0 16 14"><path d="M1 1h9v12H1z" fill="#eceef0" stroke="#858b92" strokeWidth="1" /><path d="M6.500 3.500h6l2.500 2.500v7H6.500z" fill="#eceef0" stroke="#858b92" strokeWidth="1" /><path d="M6.500 9h5V6" strokeDasharray="2 1" stroke="#858b92" strokeWidth="1" /></Icon><Grow>Ref. Level</Grow></ViewTab>
      <TabListButton $w={8} aria-label="List views"><Icon w={8} h={8}><path d="M0 1h8" /><path d="M0 3.500h8L4 7.500z" fill="#333" stroke="none" /></Icon></TabListButton>
    </ViewTabs>
    <CanvasRow>
      <Canvas>
        <Bench />
        <CubeHolder><ViewCube /></CubeHolder>
        <NavBar>
          <NavEdge aria-label="Close navigation bar"><Icon w={9}><circle cx="4.500" cy="4.500" r="4.200" fill="#b0b0b0" stroke="none" /><path d="M2.800 2.800l3.400 3.400M6.200 2.800L2.800 6.200" stroke="#fff" strokeWidth="1" /></Icon></NavEdge>
          <NavTool $h={46} aria-label="Steering wheels">
            <Icon w={26} h={24}>
              <path d="M10 1h9v9a9 9 0 11-9-9z" fill="#efefef" stroke="#8d949c" /><circle cx="10" cy="10" r="4.500" fill="#fff" stroke="#8d949c" /><path d="M4 16l3-3" stroke="#8d949c" />
              <path d="M14 15.500l3-3h8v7l-3 3.500h-8z" fill="#9cc4ea" stroke="#4f86bd" strokeWidth="1" /><path d="M14 15.500h8V23M22 15.500l3-3" stroke="#4f86bd" strokeWidth="1" />
            </Icon>
            <Caret color="#8a8f98" />
          </NavTool>
          <NavRule />
          <NavTool $h={47} aria-label="Zoom">
            <Icon w={18} h={17}><path d="M1.500 1.500h11v10h-11z" fill="#bfd8b0" stroke="#7ba765" /><circle cx="11.500" cy="10.500" r="3.500" fill="#fff" stroke="#8d949c" /><path d="M14 13l3 3.500" stroke="#8d949c" strokeWidth="1.800" /></Icon>
            <Caret color="#8a8f98" />
          </NavTool>
          <NavEdge aria-label="Navigation options"><Icon w={9}><circle cx="4.500" cy="4.500" r="4.200" fill="#b0b0b0" stroke="none" /><path d="M2 3.700h5M3 5.700h3" stroke="#fff" strokeWidth="1" /></Icon></NavEdge>
        </NavBar>
      </Canvas>
      <CanvasScroll $w={16}>
        <IconButton $w={16} aria-label="Scroll up"><Arrow dir="up" s={10} /></IconButton>
        <ScrollThumb $h={16} />
        <IconButton $w={16} aria-label="Scroll down"><Arrow dir="down" s={10} /></IconButton>
      </CanvasScroll>
    </CanvasRow>
    <ViewBar>
      <ScaleButton>1 : 20</ScaleButton>
      {viewIcons.map(([name, icon]) => <IconButton key={name} $w={21} aria-label={name}>{icon}</IconButton>)}
      <HScroll>
        <IconButton $w={18} aria-label="Scroll left"><Arrow dir="left" s={10} /></IconButton>
        <ScrollThumb $w={16} $h={15} />
        <IconButton $w={18} aria-label="Scroll right"><Arrow dir="right" s={10} /></IconButton>
      </HScroll>
      <Grip />
    </ViewBar>
  </ViewArea>
);

const Tooltip = styled.div`
  position: absolute;
  right: 1px;
  bottom: 153px;
  width: 281px;
  padding: 1px 5px;
  border: 1px solid #6f6f6f;
  background: #fff;
  color: #555;
  box-shadow: 4px 4px 2px -1px rgba(0, 0, 0, .5);
`;

/* ---------- status bar ---------- */

const StatusBar = styled.footer`
  display: flex;
  align-items: center;
  height: 23px;
  padding: 2px 6px 0 1px;
  background: #cbcbcb;
  color: #111;
`;

const FilterCount = styled.button`
  ${bareButton}
  width: 31px;
  margin-right: 63px;
  color: #2b3c57;
`;

const EndRule = styled(Separator)`
  background: #bdbdbd;
`;

const StatusTools = () => (
  <>
    <IconButton $w={26} aria-label="Select links"><Icon w={16}><rect x="1" y="1.500" width="7" height="5" rx="2.500" stroke="#c08a12" strokeWidth="2" /><rect x="8" y="1.500" width="7" height="5" rx="2.500" stroke="#c08a12" strokeWidth="2" /><rect x="1" y="1.500" width="14" height="5" rx="2.500" stroke="#f5c53a" strokeWidth=".8" /><Pointer x={6} y={5} /></Icon></IconButton>
    <IconButton $w={26} aria-label="Select underlay elements"><Icon w={16}><path d="M1 7.500L9 2v5M1 7.500h9M1 12.500h8" stroke="#1f72bd" strokeWidth="1.700" /><path d="M10 1l5 5M15 1l-5 5" stroke="#d3281c" strokeWidth="2" /><Pointer x={9} y={5} /></Icon></IconButton>
    <IconButton $w={26} aria-label="Select pinned elements"><Icon w={16}><path d="M2 1h8v3L8.500 5v3l2 1.500H1.500L3.500 8V5L2 4z" fill="#f39a5b" stroke="#b5521b" /><path d="M4.500 3h3M5 6.500h2" stroke="#fbe0cc" /><path d="M6 10v5" stroke="#b5521b" /><Pointer x={9} y={5} /></Icon></IconButton>
    <IconButton $w={26} aria-label="Select by face"><Icon w={16}><path d="M1 4l6-3v12l-6 2z" fill="#8fcaf0" stroke="#1f72bd" /><path d="M9 1.500l6 5M15 1.500l-6 5" stroke="#d3281c" strokeWidth="2" /><Pointer x={8} y={5} /></Icon></IconButton>
    <IconButton $w={26} aria-label="Drag elements"><Icon w={16}><path d="M5 0v10M0 5h10M3.500 1.500L5 0l1.500 1.500M3.500 8.500L5 10l1.500-1.500M1.500 3.500L0 5l1.500 1.500M8.500 3.500L10 5 8.500 6.500" stroke="#222" strokeWidth="1.200" /><Pointer x={9} y={5} /></Icon></IconButton>
    <IconButton $w={26} aria-label="Background processes"><Icon w={14}><circle cx="7" cy="7" r="5.200" stroke="#979797" strokeWidth="3" strokeDasharray="3 1.080" /></Icon></IconButton>
    <FilterCount aria-label="Filter"><Icon w={17}><path d="M1 2h15v2l-5.500 5v6.500H7V9L1 4z" fill="#dfe3e8" stroke="#444c55" /><path d="M8.700 4v10" stroke="#9aa2ab" strokeWidth="2" /></Icon>:0</FilterCount>
    <EndRule />
  </>
);

export default function App() {
  return (
    <Window>
      <GlobalStyle />
      <TopBar />
      <RibbonTabs />
      <AddInsRibbon />
      <OptionsBar />
      <Workspace>
        <Palettes>
          <PropertiesPalette />
          <ProjectBrowser />
        </Palettes>
        <DrawingArea />
      </Workspace>
      <StatusBar>
        <Grow>Click to select, TAB for alternates, CTRL adds, SHIFT unselects.</Grow>
        <StatusTools />
      </StatusBar>
      <Tooltip role="tooltip">Click to select, TAB for alternates, CTRL adds, SHIFT unselects.</Tooltip>
    </Window>
  );
}
